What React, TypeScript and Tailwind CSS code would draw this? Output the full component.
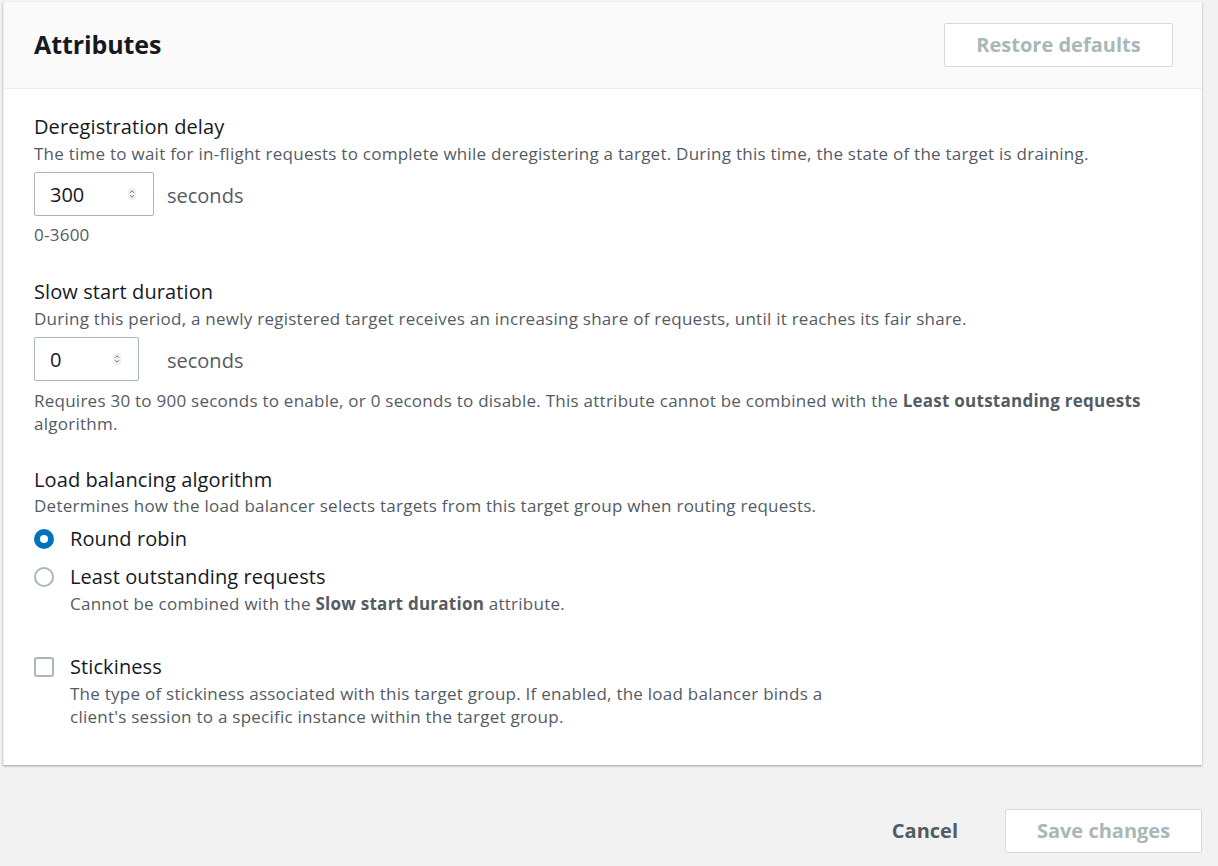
import React from 'react';

const Spinner: React.FC = () => (
  <svg width="8" height="12" viewBox="0 0 8 12">
    <rect x="0" y="0" width="8" height="12" rx="2.5" fill="#f0f1f1" />
    <path d="M2 4.8 L4 2.8 L6 4.8" fill="none" stroke="#6b7475" strokeWidth="1" />
    <path d="M2 7.2 L4 9.2 L6 7.2" fill="none" stroke="#6b7475" strokeWidth="1" />
  </svg>
);

const NumberInput: React.FC<{ value: string; width: string }> = ({ value, width }) => (
  <div className={`${width} h-[44px] border border-[#aab7b8] rounded-[2px] bg-white flex items-center justify-between pl-[15px] pr-[17px]`}>
    <span className="text-[20px] text-[#16191f] pt-[2px]">{value}</span>
    <Spinner />
  </div>
);

const label = 'text-[20px] leading-[26px] tracking-[0.1px] text-[#16191f]';
const desc = 'text-[17px] leading-[23px] tracking-[0.25px] text-[#545b64]';

const App: React.FC = () => {
  return (
    <div className="w-[1218px] h-[866px] bg-[#f2f2f2] pt-[2px] pl-[3px] pr-[16px] overflow-hidden" style={{ fontFamily: '"Open Sans", "Noto Sans", sans-serif' }}>
      <div className="bg-white shadow-[0_1px_2px_rgba(0,0,0,0.35)] border-l border-[#eaeded]">
        <header className="h-[87px] bg-[#fafafa] border-b border-[#eaeded] flex items-center justify-between pl-[30px] pr-[29px]">
          <h2 className="text-[25px] font-bold text-[#16191f] tracking-[-0.1px]">Attributes</h2>
          <button className="w-[229px] h-[44px] bg-white border border-[#d5dbdb] rounded-[2px] text-[20px] font-bold text-[#aab7b8]">Restore defaults</button>
        </header>

        <div className="pl-[30px] pr-[30px] pt-[25px] pb-[37px]">
          <div>
            <div className={label}>Deregistration delay</div>
            <p className={`${desc} mt-[2px]`}>The time to wait for in-flight requests to complete while deregistering a target. During this time, the state of the target is draining.</p>
            <div className="flex items-center mt-[7px]">
              <NumberInput value="300" width="w-[120px]" />
              <span className="ml-[13px] pt-[3px] text-[20px] text-[#545b64]">seconds</span>
            </div>
            <p className={`${desc} mt-[7px]`}>0-3600</p>
          </div>

          <div className="mt-[33px]">
            <div className={label}>Slow start duration</div>
            <p className={`${desc} mt-[2px]`}>During this period, a newly registered target receives an increasing share of requests, until it reaches its fair share.</p>
            <div className="flex items-center mt-[7px]">
              <NumberInput value="0" width="w-[105px]" />
              <span className="ml-[28px] pt-[3px] text-[20px] text-[#545b64]">seconds</span>
            </div>
            <p className={`${desc} mt-[8px]`}>
              Requires 30 to 900 seconds to enable, or 0 seconds to disable. This attribute cannot be combined with the <b className="font-bold">Least outstanding requests</b> algorithm.
            </p>
          </div>

          <div className="mt-[32px]">
            <div className={label}>Load balancing algorithm</div>
            <p className={`${desc} mt-[1px]`}>Determines how the load balancer selects targets from this target group when routing requests.</p>
            <div className="mt-[8px] flex items-center gap-[16px] h-[28px]">
              <span className="w-[20px] h-[20px] rounded-full bg-[#0073bb] flex items-center justify-center">
                <span className="w-[8px] h-[8px] rounded-full bg-white" />
              </span>
              <span className={label}>Round robin</span>
            </div>
            <div className="mt-[11px] flex items-start gap-[16px]">
              <span className="mt-[3px] w-[20px] h-[20px] rounded-full border-2 border-[#aab7b8] bg-white" />
              <div>
                <div className={label}>Least outstanding requests</div>
                <p className={`${desc} mt-[2px]`}>Cannot be combined with the <b className="font-bold">Slow start duration</b> attribute.</p>
              </div>
            </div>
          </div>

          <div className="mt-[39px] flex items-start gap-[16px]">
            <span className="mt-[3px] w-[20px] h-[20px] rounded-[3px] border-2 border-[#aab7b8] bg-white" />
            <div>
              <div className={label}>Stickiness</div>
              <p className={`${desc} mt-[2px] max-w-[775px]`}>The type of stickiness associated with this target group. If enabled, the load balancer binds a client's session to a specific instance within the target group.</p>
            </div>
          </div>
        </div>
      </div>

      <div className="flex justify-end items-center mt-[44px]">
        <button className="text-[20px] font-bold text-[#545b64] mr-[47px]">Cancel</button>
        <button className="w-[197px] h-[44px] bg-white border border-[#d5dbdb] rounded-[2px] text-[20px] font-bold text-[#aab7b8]">Save changes</button>
      </div>
    </div>
  );
};

export default App;
